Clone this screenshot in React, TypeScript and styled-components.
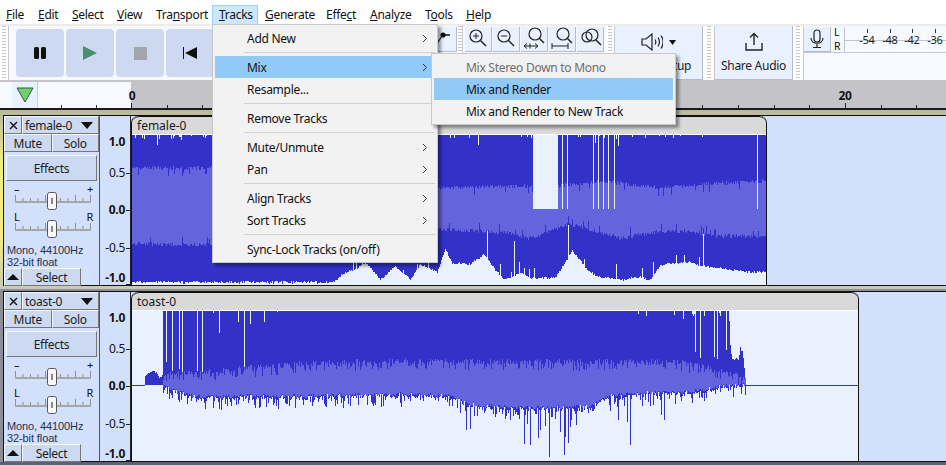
import React from "react";
import styled, { createGlobalStyle } from "styled-components";

const GlobalStyle = createGlobalStyle`
  html, body { margin: 0; padding: 0; background: #fff; }
  body { font-family: "Noto Sans", "Liberation Sans", sans-serif; font-size: 12px; letter-spacing: -0.28px; color: #111; }
  * { box-sizing: border-box; }
`;

const DARK = "#3232c8";
const LIGHT = "#6464dc";

type Pt = [number, number];

const rng = (seed: number) => () => {
  seed = (seed + 0x6d2b79f5) | 0;
  let t = Math.imul(seed ^ (seed >>> 15), 1 | seed);
  t = (t + Math.imul(t ^ (t >>> 7), 61 | t)) ^ t;
  return ((t ^ (t >>> 14)) >>> 0) / 4294967296;
};

const at = (pts: Pt[], x: number) => {
  for (let i = 1; i < pts.length; i++) {
    if (x <= pts[i][0]) {
      const [x0, y0] = pts[i - 1];
      const [x1, y1] = pts[i];
      return y0 + ((y1 - y0) * (x - x0)) / (x1 - x0 || 1);
    }
  }
  return pts[pts.length - 1][1];
};

const seg = (x: number, a: number, b: number) => `M${x + 0.5} ${a.toFixed(0)}V${b.toFixed(0)}`;

function femaleWave() {
  const r = rng(11);
  const lightTop: Pt[] = [[132, 168], [212, 168], [437, 188], [530, 186], [560, 186], [600, 181], [635, 185], [660, 188], [700, 184], [766, 181]];
  const lightBot: Pt[] = [[132, 244], [212, 245], [437, 229], [500, 232], [530, 238], [570, 224], [620, 238], [655, 232], [690, 231], [710, 236], [766, 236]];
  const darkBot: Pt[] = [
    [132, 282], [333, 282], [345, 272], [355, 270], [365, 262], [372, 270], [380, 280], [395, 266], [410, 280], [420, 264],
    [437, 272], [445, 249], [452, 263], [470, 264], [484, 254], [495, 270], [505, 280], [520, 273], [530, 278], [555, 278],
    [572, 251], [590, 273], [600, 277], [620, 280], [640, 277], [650, 280], [660, 265], [690, 262], [700, 266], [720, 268], [745, 272], [766, 272],
  ];
  const cuts = [557, 562, 567, 593, 598, 603, 608, 614, 757];
  let dark = "";
  let light = "";
  for (let x = 132; x < 766; x++) {
    const n = r();
    const notchRate = x < 215 ? 0.16 : 0.05;
    let top = 135;
    if (n < notchRate) top += 1 + r() * 3;
    else if (n < notchRate + 0.02) top += 4 + r() * 7;
    if ((x >= 533 && x <= 556) || cuts.includes(x)) top = 209;
    const lt = at(lightTop, x) + (r() - 0.5) * 4 + (r() < 0.05 ? 7 : 0);
    const lb = at(lightBot, x) + (r() - 0.5) * 4 - (r() < 0.05 ? 7 : 0);
    let db = at(darkBot, x) + (r() - 0.5) * 2;
    if (r() < 0.06) db = x < 333 ? 284 : db - r() * 18;
    if (x > 440 && r() < 0.025) db = at(darkBot, x) - 30 - r() * 25;
    dark += seg(x, top, Math.max(db, lb));
    light += seg(x, Math.max(lt, top), lb);
  }
  return { dark, light };
}

function toastWave() {
  const r = rng(29);
  const lightTop: Pt[] = [[145, 385], [163, 378], [165, 373], [200, 372], [230, 370], [300, 364], [330, 362], [400, 361], [500, 362], [600, 362], [660, 361], [690, 364], [728, 373], [745, 378]];
  const lightBot: Pt[] = [[163, 386], [180, 392], [200, 397], [240, 396], [300, 396], [400, 394], [450, 396], [470, 405], [530, 408], [590, 406], [610, 395], [640, 393], [690, 392], [728, 385], [745, 384]];
  const tail: Pt[] = [[728, 311], [729, 321], [730, 345], [732, 358], [735, 357], [738, 358], [740, 347], [742, 350], [744, 365], [745, 375]];
  const start: Pt[] = [[145, 375], [150, 371], [153, 370], [157, 372], [160, 376], [163, 374]];
  const longCuts: Record<number, number> = {
    166: 362, 172: 371, 179: 369, 182: 372, 197: 371, 202: 372, 219: 333, 244: 367, 238: 322, 250: 324, 264: 322,
    638: 314, 674: 315, 683: 319, 695: 352, 700: 358, 704: 316, 714: 357, 717: 359, 726: 350,
  };
  const spikes: Record<number, number> = {
    466: 430, 470: 429, 524: 444, 527: 424, 530: 445, 538: 438, 549: 457, 564: 455, 565: 437, 568: 443,
    618: 420, 627: 422, 630: 445, 661: 415, 664: 420, 610: 411, 560: 432, 540: 430, 545: 426, 570: 427, 576: 425,
  };
  let dark = "";
  let light = "";
  for (let x = 145; x < 746; x++) {
    if (x < 163) {
      dark += seg(x, at(start, x) + r() * 3, 385);
      continue;
    }
    let top = 311;
    const n = r();
    const busy = x < 325 || x > 635;
    if (busy && n < 0.07) top += 1 + r() * 4;
    if (longCuts[x]) top = longCuts[x];
    if (x >= 728) top = at(tail, x) + r() * 3;
    const lb = at(lightBot, x) + (r() - 0.5) * 4;
    const lt = at(lightTop, x) + (r() - 0.5) * 6 + (r() < 0.25 ? 6 : 0);
    let db = lb + r() * 3;
    if (r() < 0.3) db = lb + 3 + r() * 9;
    if (spikes[x]) db = spikes[x];
    dark += seg(x, top, db);
    light += seg(x, Math.max(lt, top), lb);
  }
  dark += "M132 385.5H145M746 385.5H858";
  return { dark, light };
}

const Page = styled.div`
  position: relative;
  width: 946px;
  height: 465px;
  overflow: hidden;
  background: #5f6078;
`;

const MenuBar = styled.nav`
  display: flex;
  height: 24px;
  padding: 5px 0 0 0;
  margin-left: -1px;
  background: #fff;
`;

const MenuLabel = styled.div<{ $open?: boolean; $width: number }>`
  width: ${(p) => p.$width}px;
  height: 19px;
  padding-left: 6px;
  white-space: nowrap;
  background: ${(p) => (p.$open ? "#cce8ff" : "transparent")};
  border: 1px solid ${(p) => (p.$open ? "#99d1ff" : "transparent")};
  border-bottom: 0;
  line-height: 17px;
`;

const Dock = styled.div`
  display: flex;
  height: 58px;
  background: #f6f9ff;
  border-top: 2px solid #ececec;
  border-bottom: 2px solid #c4c4c8;
`;

const Grip = styled.div<{ $width?: number }>`
  flex: none;
  width: ${(p) => p.$width ?? 8}px;
  background: #fff;
  border-right: 1px solid #c9c9cc;
  &::after {
    content: "";
    display: block;
    height: 100%;
    margin: 0 ${(p) => ((p.$width ?? 8) - 5) / 2}px;
    background: repeating-linear-gradient(to bottom, #c4c4c4 0 1px, #fff 1px 3px);
  }
`;

const TransportGroup = styled.div`
  display: flex;
  gap: 2px;
  width: 311px;
  padding: 3px 0 0 7px;
`;

const TransportButton = styled.div`
  width: 48px;
  height: 48px;
  display: flex;
  align-items: center;
  justify-content: center;
  background: #ccd9f0;
  border-radius: 4px;
`;

const ToolGroup = styled.div`
  display: flex;
  gap: 1px;
  width: 137px;
  padding: 1px 0 0 0;
  justify-content: flex-end;
`;

const EditGroup = styled.div`
  display: flex;
  gap: 1px;
  width: 143px;
  padding: 1px 0 0 2px;
`;

const ToolButton = styled.div<{ $width?: number }>`
  width: ${(p) => p.$width ?? 27}px;
  height: 25px;
  display: flex;
  align-items: center;
  justify-content: center;
  background: #e9f1fe;
  border-right: 1px solid #b5bcc9;
  border-bottom: 1px solid #b5bcc9;
`;

const LargeButton = styled.div<{ $width: number }>`
  flex: none;
  width: ${(p) => p.$width}px;
  display: flex;
  flex-direction: column;
  align-items: center;
  background: #e9f1fe;
  border-right: 1px solid #b5bcc9;
  border-bottom: 1px solid #b5bcc9;
`;

const LargeIcon = styled.div`
  height: 32px;
  display: flex;
  align-items: center;
  justify-content: center;
  gap: 6px;
`;

const LargeLabel = styled.div`
  line-height: 16px;
  white-space: nowrap;
  color: #1c1c1c;
`;

const MeterGroup = styled.div`
  flex: 1;
  display: flex;
  flex-direction: column;
  padding-top: 1px;
`;

const MeterTop = styled.div`
  display: flex;
  height: 26px;
  border-bottom: 1px solid #c4c8d0;
`;

const MeterSides = styled.div`
  width: 13px;
  padding-left: 3px;
  display: flex;
  flex-direction: column;
  font-size: 10.5px;
  line-height: 14px;
  margin-top: -2px;
`;

const MeterRest = styled.div`
  flex: 1;
  background: #f6f9ff;
`;

const Timeline = styled.div`
  display: flex;
  height: 28px;
  background: #f6f9ff;
  border-bottom: 2px solid #1a1a1a;
`;

const TimelineLeft = styled.div`
  width: 131px;
  padding-left: 12px;
`;

const PlayHeadButton = styled.div`
  width: 26px;
  height: 26px;
  display: flex;
  align-items: center;
  justify-content: center;
  background: #e9f1fe;
  border-right: 1px solid #c8cedb;
`;

const TimelineScale = styled.svg`
  display: block;
  flex: none;
  overflow: visible;
`;

const TrackFrame = styled.section<{ $focused?: boolean }>`
  padding: ${(p) => (p.$focused ? "5px 0 3px 3px" : "2px 0 0 3px")};
  background: ${(p) => (p.$focused ? "linear-gradient(#b8b8a0, #f2ee7c 30%, #f2ee7c 70%, #c8c8b8)" : "#8e8e98")};
`;

const TrackBody = styled.div`
  display: flex;
  height: 171px;
  background: #d2e0fb;
  border-top: 1px solid #111;
  border-bottom: 1px solid #111;
  border-left: 1px solid #111;
`;

const ControlPanel = styled.div`
  flex: none;
  width: 96px;
  display: flex;
  flex-direction: column;
  border-right: 1px solid #555;
  background: #d2e0fb;
`;

const ControlRow = styled.div`
  display: flex;
  height: 18px;
`;

const RaisedButton = styled.div<{ $width?: number; $grow?: boolean }>`
  ${(p) => (p.$grow ? "flex: 1;" : `flex: none; width: ${p.$width}px;`)}
  display: flex;
  align-items: center;
  justify-content: center;
  background: #ccd9f0;
  color: #1c1c1c;
  border: 1px solid;
  border-color: #f4f8ff #777 #777 #f4f8ff;
  white-space: nowrap;
`;

const NameButton = styled(RaisedButton)`
  justify-content: space-between;
  padding: 0 5px 0 2px;
`;

const EffectsButton = styled(RaisedButton)`
  height: 26px;
  margin: 3px 2px 0 2px;
`;

const SliderCaps = styled.div<{ $top: number }>`
  display: flex;
  justify-content: space-between;
  height: 9px;
  margin-top: ${(p) => p.$top}px;
  padding: 0 6px 0 10px;
  font-size: 11px;
  line-height: 9px;
`;

const SliderArt = styled.svg`
  display: block;
  margin-top: -4px;
  flex: none;
`;

const FormatInfo = styled.div`
  margin-top: 5px;
  padding-left: 3px;
  font-family: "Liberation Sans", sans-serif;
  font-size: 11px;
  line-height: 12px;
  letter-spacing: -0.1px;
  color: #26304a;
`;

const PanelFooter = styled.div`
  display: flex;
  height: 18px;
  margin-top: auto;
`;

const ScaleArt = styled.svg`
  display: block;
  flex: none;
`;

const Lane = styled.div`
  flex: 1;
  min-width: 0;
`;

const Clip = styled.div<{ $width: number }>`
  width: ${(p) => p.$width}px;
  height: 169px;
  overflow: hidden;
  background: #e9f1fe;
  border-left: 1px solid #111;
  border-right: 1px solid #111;
  border-radius: 7px 7px 0 0;
`;

const ClipTitle = styled.div`
  height: 19px;
  padding-left: 5px;
  line-height: 17px;
  letter-spacing: 0;
  background: #d9d9d9;
  border-top: 1px solid #111;
  border-bottom: 1px solid #fff;
  color: #1a1a1a;
  border-radius: 7px 7px 0 0;
`;

const WaveArt = styled.svg`
  display: block;
`;

const Popup = styled.div<{ $x: number; $y: number; $width: number }>`
  position: absolute;
  left: ${(p) => p.$x}px;
  top: ${(p) => p.$y}px;
  width: ${(p) => p.$width}px;
  padding: 2px;
  background: #f2f2f2;
  border: 1px solid #c8c8c8;
  box-shadow: 3px 3px 3px rgba(0, 0, 0, 0.4);
`;

const PopupItem = styled.div<{ $active?: boolean; $disabled?: boolean; $indent: number }>`
  height: 22px;
  display: flex;
  align-items: center;
  justify-content: space-between;
  padding: 0 7px 0 ${(p) => p.$indent}px;
  white-space: nowrap;
  background: ${(p) => (p.$active ? "#91c9f7" : "transparent")};
  color: ${(p) => (p.$disabled ? "#6d6d6d" : "#111")};
`;

const PopupRule = styled.div`
  height: 1px;
  margin: 3px 0 3px 29px;
  background: #d0d0d0;
`;

const Chevron = () => (
  <svg width="6" height="9" viewBox="0 0 6 9">
    <path d="M1 1l3.5 3.5L1 8" fill="none" stroke="#333" strokeWidth="1" />
  </svg>
);

const Magnifier = ({ children }: { children?: React.ReactNode }) => (
  <svg width="22" height="22" viewBox="0 0 22 22" fill="none" stroke="#222" strokeWidth="1.2">
    <circle cx="9" cy="8" r="6" />
    <path d="M13.5 12.5L19 18" strokeWidth="1.5" />
    {children}
  </svg>
);

const GAIN_TICKS = [0, 7.5, 15, 22.5, 30, 37.5, 45, 52.5, 60, 67.5, 75];

const Slider = () => (
  <SliderArt width="95" height="22" viewBox="0 0 95 22">
    {GAIN_TICKS.map((t) => (
      <path key={t} d={`M${11.5 + t} ${t % 30 === 0 || t === 75 ? 6 : 9}V12`} stroke="#8f8f8f" />
    ))}
    <rect x="11" y="12" width="76" height="2" fill="#a6a6a6" />
    <rect x="43.5" y="3.500" width="9" height="17" rx="2" fill="#f7f7f7" stroke="#555" />
    <rect x="47" y="9" width="2" height="6" fill="#8a8a8a" />
  </SliderArt>
);

const SCALE_MARKS: { y: number; label: string; bold: boolean }[] = [
  { y: 26, label: "1.0", bold: true },
  { y: 57, label: "0.5", bold: false },
  { y: 94, label: "0.0", bold: true },
  { y: 132, label: "-0.5", bold: false },
  { y: 162, label: "-1.0", bold: true },
];

const AmpScale = () => (
  <ScaleArt width="31" height="169" viewBox="0 0 31 169">
    {SCALE_MARKS.map((m) => (
      <text key={m.y} x="25" y={m.y + 4} textAnchor="end" fontSize="12" fontWeight={m.bold ? 700 : 400} fill="#111" fontFamily="'Noto Sans', sans-serif">
        {m.label}
      </text>
    ))}
    {[57, 94, 132].map((y) => (
      <path key={y} d={`M26 ${y + 0.5}H31`} stroke="#222" />
    ))}
    <path d="M26 168.500H31" stroke="#222" />
    <path d="M30.500 0V169" stroke="#222" />
  </ScaleArt>
);

function Track({ name, clipWidth, focused, wave }: { name: string; clipWidth: number; focused?: boolean; wave: { dark: string; light: string } }) {
  const waveTop = focused ? 135 : 311;
  return (
    <TrackFrame $focused={focused}>
      <TrackBody>
        <ControlPanel>
          <ControlRow>
            <RaisedButton $width={18}>
              <svg width="9" height="9" viewBox="0 0 9 9"><path d="M1 1l7 7M8 1L1 8" stroke="#111" strokeWidth="1.4" /></svg>
            </RaisedButton>
            <NameButton $grow>
              <span>{name}</span>
              <svg width="12" height="7" viewBox="0 0 12 7"><path d="M0 0h12L6 7z" fill="#111" /></svg>
            </NameButton>
          </ControlRow>
          <ControlRow>
            <RaisedButton $grow>Mute</RaisedButton>
            <RaisedButton $grow>Solo</RaisedButton>
          </ControlRow>
          <EffectsButton>Effects</EffectsButton>
          <SliderCaps $top={3}><span>–</span><span>+</span></SliderCaps>
          <Slider />
          <SliderCaps $top={1}><span>L</span><span>R</span></SliderCaps>
          <Slider />
          <FormatInfo>Mono, 44100Hz<br />32-bit float</FormatInfo>
          <PanelFooter>
            <RaisedButton $width={18}>
              <svg width="12" height="6" viewBox="0 0 12 6"><path d="M6 0l6 6H0z" fill="#111" /></svg>
            </RaisedButton>
            <RaisedButton $width={59}>Select</RaisedButton>
          </PanelFooter>
        </ControlPanel>
        <AmpScale />
        <Lane>
          <Clip $width={clipWidth}>
            <ClipTitle>{name}</ClipTitle>
            <WaveArt width={clipWidth - 2} height={150} viewBox={`132 ${waveTop} ${clipWidth - 2} 150`} shapeRendering="crispEdges">
              <path d={wave.dark} stroke={DARK} fill="none" />
              <path d={wave.light} stroke={LIGHT} fill="none" />
            </WaveArt>
          </Clip>
        </Lane>
      </TrackBody>
    </TrackFrame>
  );
}

const MENU_ITEMS: [React.ReactNode, number][] = [
  [<><u>F</u>ile</>, 32],
  [<><u>E</u>dit</>, 34],
  [<><u>S</u>elect</>, 45],
  [<><u>V</u>iew</>, 39],
  [<>Tra<u>n</u>sport</>, 63],
  [<><u>T</u>racks</>, 46],
  [<><u>G</u>enerate</>, 61],
  [<>Effe<u>c</u>t</>, 44],
  [<><u>A</u>nalyze</>, 55],
  [<>T<u>o</u>ols</>, 41],
  [<><u>H</u>elp</>, 40],
];

type Entry = { label: string; arrow?: boolean; active?: boolean } | "rule";

const TRACKS_MENU: Entry[] = [
  { label: "Add New", arrow: true },
  "rule",
  { label: "Mix", arrow: true, active: true },
  { label: "Resample..." },
  "rule",
  { label: "Remove Tracks" },
  "rule",
  { label: "Mute/Unmute", arrow: true },
  { label: "Pan", arrow: true },
  "rule",
  { label: "Align Tracks", arrow: true },
  { label: "Sort Tracks", arrow: true },
  "rule",
  { label: "Sync-Lock Tracks (on/off)" },
];

const SECONDS = Array.from({ length: 23 }, (_, i) => i);
const LEAD_TICKS = [61.5, 96.5];
const METER_MARKS: [number, string][] = [[23, "-54"], [46, "-48"], [68, "-42"], [91, "-36"]];

const femaleData = femaleWave();
const toastData = toastWave();

export default function App() {
  return (
    <Page>
      <GlobalStyle />
      <MenuBar>
        {MENU_ITEMS.map(([label, width], i) => (
          <MenuLabel key={i} $width={width} $open={i === 5}>{label}</MenuLabel>
        ))}
      </MenuBar>

      <Dock>
        <Grip $width={9} />
        <TransportGroup>
          <TransportButton>
            <svg width="14" height="14" viewBox="0 0 14 14"><rect x="1" y="1" width="5" height="12" rx="1.5" fill="#111" /><rect x="8" y="1" width="5" height="12" rx="1.5" fill="#111" /></svg>
          </TransportButton>
          <TransportButton>
            <svg width="16" height="16" viewBox="0 0 16 16"><path d="M1 1l14 7-14 7z" fill="#4b8f6e" /></svg>
          </TransportButton>
          <TransportButton>
            <svg width="13" height="13" viewBox="0 0 13 13"><rect width="13" height="13" fill="#a2a5ad" /></svg>
          </TransportButton>
          <TransportButton>
            <svg width="16" height="14" viewBox="0 0 16 14"><path d="M1.500 1v12" stroke="#111" /><path d="M15 1v12L3 7z" fill="#111" /></svg>
          </TransportButton>
          <TransportButton />
          <TransportButton />
        </TransportGroup>
        <ToolGroup>
          <ToolButton>
            <svg width="22" height="20" viewBox="0 0 22 20"><path d="M4 16L10 7" stroke="#222" strokeWidth="1.3" /><circle cx="11" cy="6" r="2.6" fill="#111" /><path d="M13 6h5" stroke="#111" strokeWidth="1.5" /></svg>
          </ToolButton>
        </ToolGroup>
        <Grip $width={6} />
        <EditGroup>
          <ToolButton>
            <Magnifier><path d="M6 8h6M9 5v6" strokeWidth="1" /></Magnifier>
          </ToolButton>
          <ToolButton>
            <Magnifier><path d="M6 8h6" strokeWidth="1" /></Magnifier>
          </ToolButton>
          <ToolButton>
            <svg width="24" height="24" viewBox="0 0 24 24" fill="none" stroke="#222" strokeWidth="1.2">
              <circle cx="13" cy="7" r="6" /><path d="M17.500 11.500L22 16" strokeWidth="1.5" /><path d="M2 19h14M2 19l3-2.500M2 19l3 2.500M16 19l-3-2.500M16 19l-3 2.500M8 16.500v5" strokeWidth="1" />
            </svg>
          </ToolButton>
          <ToolButton>
            <svg width="24" height="24" viewBox="0 0 24 24" fill="none" stroke="#222" strokeWidth="1.2">
              <circle cx="13" cy="7" r="6" /><path d="M17.500 11.500L22 16" strokeWidth="1.5" /><path d="M2 19h16M2 16v6M18 16v6" strokeWidth="1" />
            </svg>
          </ToolButton>
          <ToolButton>
            <svg width="24" height="24" viewBox="0 0 24 24" fill="none" stroke="#222" strokeWidth="1.2">
              <circle cx="14" cy="8" r="6" /><circle cx="9" cy="10" r="5" /><path d="M18 13l5 5" strokeWidth="1.5" />
            </svg>
          </ToolButton>
        </EditGroup>
        <Grip $width={9} />
        <LargeButton $width={88}>
          <LargeIcon>
            <svg width="22" height="18" viewBox="0 0 22 18" fill="none" stroke="#222" strokeWidth="1.2">
              <path d="M1 6h4l6-5v16l-6-5H1z" /><path d="M14 6.500c1 1.500 1 3.500 0 5M17 4.500c1.800 2.800 1.800 6.200 0 9M20 2.500c2.600 4 2.600 9 0 13" />
            </svg>
            <svg width="7" height="5" viewBox="0 0 7 5"><path d="M0 0h7L3.500 5z" fill="#111" /></svg>
          </LargeIcon>
          <LargeLabel>Audio Setup</LargeLabel>
        </LargeButton>
        <Grip $width={12} />
        <LargeButton $width={78}>
          <LargeIcon>
            <svg width="20" height="20" viewBox="0 0 20 20" fill="none" stroke="#222" strokeWidth="1.4">
              <path d="M10 13V2M6 5.500L10 1.500l4 4" /><path d="M2 11v7h16v-7" />
            </svg>
          </LargeIcon>
          <LargeLabel>Share Audio</LargeLabel>
        </LargeButton>
        <Grip $width={11} />
        <MeterGroup>
          <MeterTop>
            <ToolButton $width={27}>
              <svg width="14" height="20" viewBox="0 0 14 20" fill="none" stroke="#222" strokeWidth="1.2">
                <rect x="4" y="1" width="6" height="12" rx="3" /><path d="M1 9c0 7 12 7 12 0M7 15v3M3 18.500h8" />
              </svg>
            </ToolButton>
            <MeterSides><span>L</span><span>R</span></MeterSides>
            <svg width="102" height="25" viewBox="0 0 102 25">
              <rect width="102" height="25" fill="#f6f9ff" />
              <path d="M0 13.500H102" stroke="#c0c4cc" />
              <path d="M.5 0V25" stroke="#c0c4cc" />
              {METER_MARKS.map(([x, t]) => (
                <g key={t}>
                  <path d={`M${x + 0.5} 2V6`} stroke="#333" />
                  <text x={x} y="17" textAnchor="middle" fontSize="11" fill="#1c1c1c" fontFamily="'Noto Sans', sans-serif">{t}</text>
                </g>
              ))}
            </svg>
          </MeterTop>
          <MeterRest />
        </MeterGroup>
      </Dock>

      <Timeline>
        <TimelineLeft>
          <PlayHeadButton>
            <svg width="18" height="16" viewBox="0 0 18 16"><path d="M1 1h16L9 15z" fill="#70d070" stroke="#2d5a3a" /></svg>
          </PlayHeadButton>
        </TimelineLeft>
        <TimelineScale width="815" height="26" viewBox="131 0 815 26">
          <rect x="131" y="0" width="815" height="26" fill="#c4c4c8" />
          {LEAD_TICKS.map((x) => (
            <path key={x} d={`M${x} 23V26`} stroke="#333" />
          ))}
          {SECONDS.map((s) => {
            const x = Math.round(131 + s * 35.7) + 0.5;
            return <path key={s} d={`M${x} ${s % 20 === 0 ? 21 : 23}V26`} stroke="#222" />;
          })}
          <text x="132" y="18" textAnchor="middle" fontSize="12" fontWeight="700" fill="#111" fontFamily="'Noto Sans', sans-serif">0</text>
          <text x="845" y="18" textAnchor="middle" fontSize="12" fontWeight="700" fill="#111" fontFamily="'Noto Sans', sans-serif">20</text>
        </TimelineScale>
      </Timeline>

      <Track name="female-0" clipWidth={636} focused wave={femaleData} />
      <Track name="toast-0" clipWidth={728} wave={toastData} />

      <Popup $x={212} $y={24} $width={226}>
        {TRACKS_MENU.map((item, i) =>
          item === "rule" ? (
            <PopupRule key={i} />
          ) : (
            <PopupItem key={i} $active={item.active} $indent={32}>
              <span>{item.label}</span>
              {item.arrow && <Chevron />}
            </PopupItem>
          )
        )}
      </Popup>
      <Popup $x={431} $y={53} $width={245}>
        <PopupItem $disabled $indent={32}>Mix Stereo Down to Mono</PopupItem>
        <PopupItem $active $indent={32}>Mix and Render</PopupItem>
        <PopupItem $indent={32}>Mix and Render to New Track</PopupItem>
      </Popup>
    </Page>
  );
}
